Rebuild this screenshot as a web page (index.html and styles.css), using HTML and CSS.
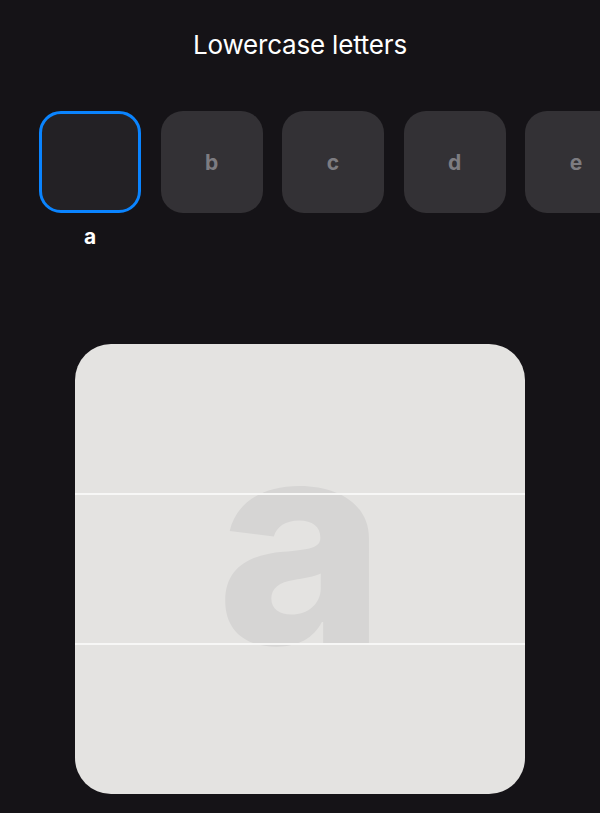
FILE: index.html
```html
<!DOCTYPE html>
<html lang="en">
<head>
<meta charset="utf-8">
<title>Lowercase letters</title>
<link rel="stylesheet" href="styles.css">
</head>
<body>
<main class="screen">
  <h1 class="title">Lowercase letters</h1>
  <div class="tiles">
    <div class="tile-col">
      <div class="tile tile-active"></div>
      <div class="tile-label">a</div>
    </div>
    <div class="tile-col"><div class="tile">b</div></div>
    <div class="tile-col"><div class="tile">c</div></div>
    <div class="tile-col"><div class="tile">d</div></div>
    <div class="tile-col"><div class="tile">e</div></div>
  </div>
  <div class="card">
    <svg class="glyph" viewBox="0 0 450 450" width="450" height="450" aria-hidden="true">
      <text x="226" y="300" text-anchor="middle">a</text>
    </svg>
    <div class="band band-top"></div>
    <div class="band band-mid"></div>
    <div class="band band-bot"></div>
  </div>
</main>
</body>
</html>
```
FILE: styles.css
```css
html, body {
  margin: 0;
  padding: 0;
  background: #151317;
}
body {
  font-family: Inter, "Noto Sans", "Liberation Sans", sans-serif;
  color: #ffffff;
  width: 600px;
  height: 813px;
  overflow: hidden;
}
.screen {
  display: flex;
  flex-direction: column;
  align-items: center;
}
.title {
  margin: 29px 0 0;
  font-size: 26px;
  line-height: 32px;
  font-weight: 400;
  letter-spacing: -0.2px;
  text-align: center;
}
.tiles {
  align-self: stretch;
  display: flex;
  gap: 19.5px;
  padding-left: 39px;
  margin-top: 50px;
  overflow: hidden;
}
.tile-col {
  flex: 0 0 102px;
  display: flex;
  flex-direction: column;
  align-items: center;
}
.tile {
  box-sizing: border-box;
  width: 102px;
  height: 102px;
  border-radius: 22px;
  background: #333135;
  color: #7d7c81;
  font-weight: 700;
  font-size: 21px;
  display: flex;
  align-items: center;
  justify-content: center;
}
.tile-active {
  background: #232125;
  border: 3px solid #0a84ff;
}
.tile-label {
  margin-top: 12px;
  font-size: 21px;
  line-height: 24px;
  font-weight: 700;
  color: #ffffff;
}
.card {
  position: relative;
  margin-top: 95px;
  width: 450px;
  height: 450px;
  border-radius: 36px;
  background: #e4e3e1;
  overflow: hidden;
  display: flex;
  flex-direction: column;
}
.glyph {
  position: absolute;
  left: 0;
  top: 0;
  z-index: 0;
}
.glyph text {
  font-family: Inter, "Liberation Sans", sans-serif;
  font-weight: 800;
  font-size: 286px;
  fill: #d6d5d4;
}
.band {
  position: relative;
  z-index: 1;
  flex: 0 0 auto;
  box-sizing: border-box;
}
.band-top {
  height: 151px;
  border-bottom: 2px solid #f7f7f6;
}
.band-mid {
  height: 150px;
  border-bottom: 2px solid #f7f7f6;
}
.band-bot {
  flex: 1 1 auto;
}
```
